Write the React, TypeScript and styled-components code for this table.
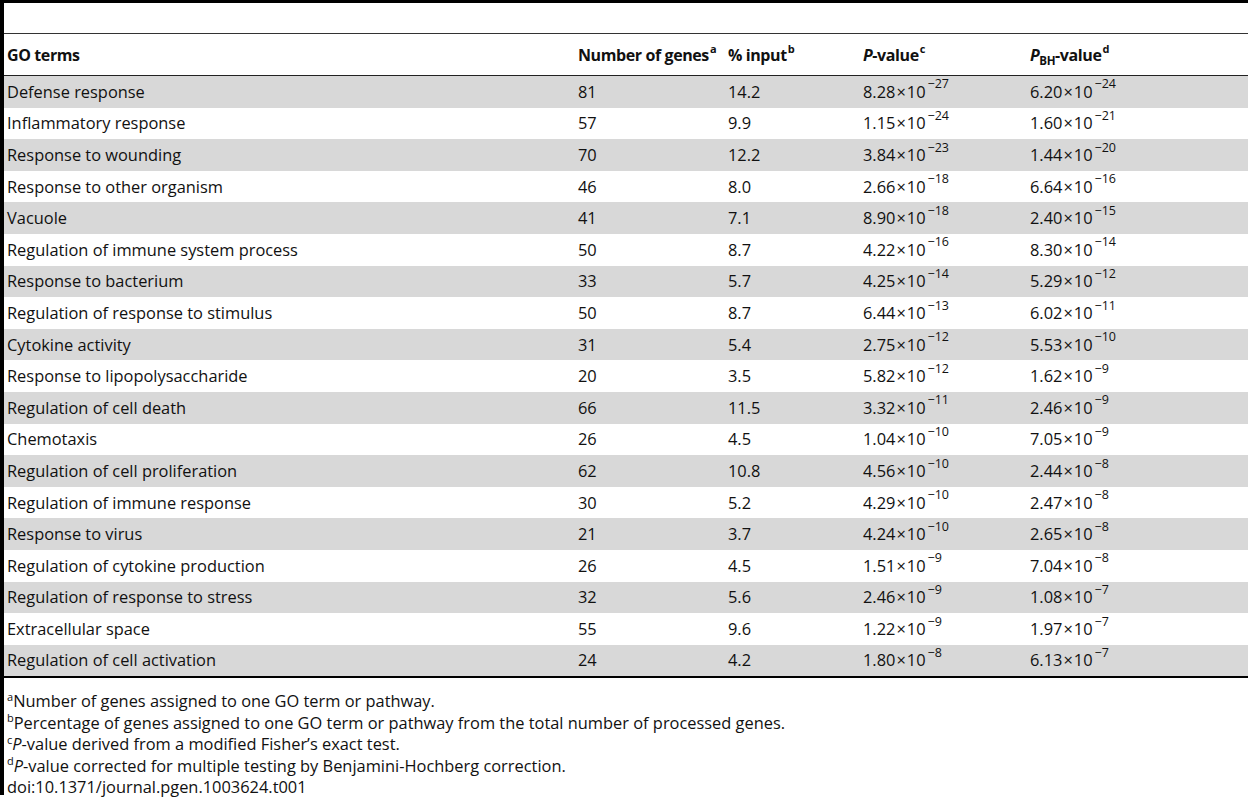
import styled, { createGlobalStyle } from 'styled-components'

const GlobalStyle = createGlobalStyle`
  html, body {
    margin: 0;
    padding: 0;
    background: #ffffff;
  }
  body {
    font-family: 'Open Sans', 'Noto Sans', sans-serif;
    color: #111111;
  }
`

// ── Layout shells ────────────────────────────────────────────────

const Page = styled.div`
  width: 1248px;
  height: 800px;
  overflow: hidden;
  border-top: 3px solid #000;
  box-sizing: border-box;
`

const Frame = styled.div`
  border-left: 4px solid #000;
  height: 792px;
  box-sizing: border-box;
`

const TitleGap = styled.div`
  height: 30px;
  border-bottom: 1.5px solid #333;
`

const Table = styled.table`
  width: 100%;
  border-collapse: collapse;
  table-layout: fixed;
  font-size: 16.4px;
  border-bottom: 2px solid #000;
`

const HeadCell = styled.th<{ $w?: number }>`
  width: ${({ $w }) => ($w ? `${$w}px` : 'auto')};
  height: 41px;
  padding: 0 0 0 3px;
  text-align: left;
  font-size: 16px;
  font-weight: 700;
  letter-spacing: -0.4px;
  vertical-align: middle;
  border-bottom: 1.5px solid #222;
  white-space: nowrap;
`

const Row = styled.tr<{ $shaded: boolean }>`
  background: ${({ $shaded }) => ($shaded ? '#d8d8d8' : '#ffffff')};
`

const Cell = styled.td`
  height: 31.6px;
  padding: 0 0 0 3px;
  vertical-align: middle;
  white-space: nowrap;
  line-height: 20px;
`

const Sup = styled.sup`
  font-size: 11px;
  line-height: 0;
  vertical-align: 0;
  position: relative;
  top: -0.7em;
  margin-left: 1px;
`

const Sub = styled.sub`
  font-size: 11.5px;
  line-height: 0;
  vertical-align: 0;
  position: relative;
  top: 0.35em;
`

const Exp = styled.sup`
  font-size: 12.5px;
  line-height: 0;
  vertical-align: 0;
  position: relative;
  top: -0.75em;
  margin-left: 2px;
`

const Times = styled.span`
  margin: 0 1px;
`

const Notes = styled.div`
  padding: 12px 0 0 3px;
  font-size: 16.4px;
  line-height: 21.5px;
`

const NoteMark = styled.sup`
  font-size: 11px;
  line-height: 0;
  vertical-align: 0;
  position: relative;
  top: -0.6em;
`

// ── Data ─────────────────────────────────────────────────────────

type Term = [string, string, string, string, string, string, string]

const TERMS: Term[] = [
  ['Defense response', '81', '14.2', '8.28', '27', '6.20', '24'],
  ['Inflammatory response', '57', '9.9', '1.15', '24', '1.60', '21'],
  ['Response to wounding', '70', '12.2', '3.84', '23', '1.44', '20'],
  ['Response to other organism', '46', '8.0', '2.66', '18', '6.64', '16'],
  ['Vacuole', '41', '7.1', '8.90', '18', '2.40', '15'],
  ['Regulation of immune system process', '50', '8.7', '4.22', '16', '8.30', '14'],
  ['Response to bacterium', '33', '5.7', '4.25', '14', '5.29', '12'],
  ['Regulation of response to stimulus', '50', '8.7', '6.44', '13', '6.02', '11'],
  ['Cytokine activity', '31', '5.4', '2.75', '12', '5.53', '10'],
  ['Response to lipopolysaccharide', '20', '3.5', '5.82', '12', '1.62', '9'],
  ['Regulation of cell death', '66', '11.5', '3.32', '11', '2.46', '9'],
  ['Chemotaxis', '26', '4.5', '1.04', '10', '7.05', '9'],
  ['Regulation of cell proliferation', '62', '10.8', '4.56', '10', '2.44', '8'],
  ['Regulation of immune response', '30', '5.2', '4.29', '10', '2.47', '8'],
  ['Response to virus', '21', '3.7', '4.24', '10', '2.65', '8'],
  ['Regulation of cytokine production', '26', '4.5', '1.51', '9', '7.04', '8'],
  ['Regulation of response to stress', '32', '5.6', '2.46', '9', '1.08', '7'],
  ['Extracellular space', '55', '9.6', '1.22', '9', '1.97', '7'],
  ['Regulation of cell activation', '24', '4.2', '1.80', '8', '6.13', '7'],
]

function Sci({ base, exp }: { base: string; exp: string }) {
  return (
    <>
      {base}
      <Times>×</Times>10
      <Exp>−{exp}</Exp>
    </>
  )
}

export default function App() {
  return (
    <Page>
      <GlobalStyle />
      <Frame>
        <TitleGap />
        <Table>
          <thead>
            <tr>
              <HeadCell $w={568}>GO terms</HeadCell>
              <HeadCell $w={147}>
                Number of genes<Sup>a</Sup>
              </HeadCell>
              <HeadCell $w={132}>
                % input<Sup>b</Sup>
              </HeadCell>
              <HeadCell $w={164}>
                <i>P</i>-value<Sup>c</Sup>
              </HeadCell>
              <HeadCell>
                <i>P</i>
                <Sub>BH</Sub>-value<Sup>d</Sup>
              </HeadCell>
            </tr>
          </thead>
          <tbody>
            {TERMS.map(([name, n, pct, pb, pe, bb, be], i) => (
              <Row key={name} $shaded={i % 2 === 0}>
                <Cell>{name}</Cell>
                <Cell>{n}</Cell>
                <Cell>{pct}</Cell>
                <Cell>
                  <Sci base={pb} exp={pe} />
                </Cell>
                <Cell>
                  <Sci base={bb} exp={be} />
                </Cell>
              </Row>
            ))}
          </tbody>
        </Table>
        <Notes>
          <div>
            <NoteMark>a</NoteMark>Number of genes assigned to one GO term or pathway.
          </div>
          <div>
            <NoteMark>b</NoteMark>Percentage of genes assigned to one GO term or pathway from
            the total number of processed genes.
          </div>
          <div>
            <NoteMark>c</NoteMark>
            <i>P</i>-value derived from a modified Fisher’s exact test.
          </div>
          <div>
            <NoteMark>d</NoteMark>
            <i>P</i>-value corrected for multiple testing by Benjamini-Hochberg correction.
          </div>
          <div>doi:10.1371/journal.pgen.1003624.t001</div>
        </Notes>
      </Frame>
    </Page>
  )
}
